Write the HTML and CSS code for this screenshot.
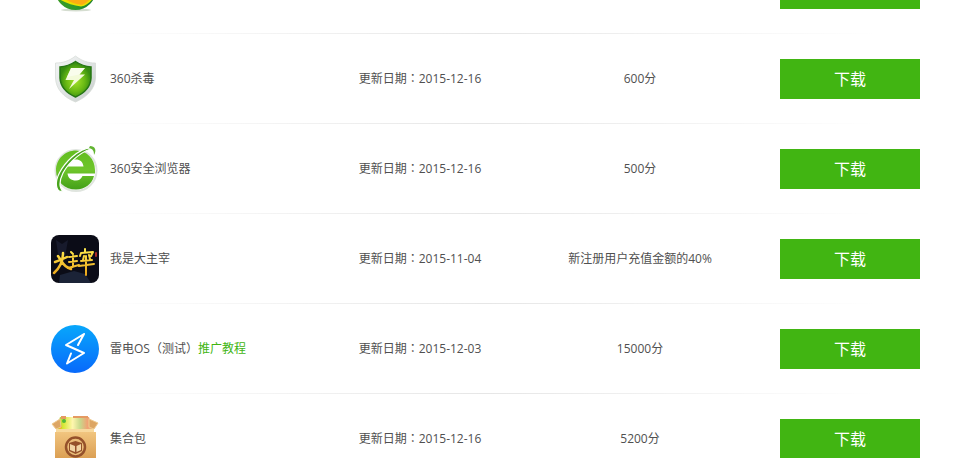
FILE: index.html
```html
<!DOCTYPE html>
<html lang="zh-CN">
<head>
<meta charset="utf-8">
<title>软件下载</title>
<link rel="stylesheet" href="styles.css">
</head>
<body>
<ul class="apps">
  <li class="app">
    <svg class="icon" viewBox="0 0 48 48" aria-hidden="true">
      <defs><linearGradient id="ball" x1="0" x2="1"><stop offset="0" stop-color="#3a9a22"/><stop offset=".5" stop-color="#2f9a2c"/><stop offset="1" stop-color="#157a2c"/></linearGradient></defs>
      <ellipse cx="25" cy="45" rx="15" ry="1.500" fill="#d5ddd0"/>
      <circle cx="24.500" cy="24.500" r="20.500" fill="url(#ball)"/>
      <path d="M8 34Q18 40 30 41.500Q38 40 43 32L40 18H12Z" fill="#e8e000"/>
      <path d="M14 34Q21 39 31 40Q37 38 41 31L36 16Z" fill="#fbad12"/>
    </svg>
    <span class="name"></span><span class="date"></span><span class="points"></span>
    <a class="download" href="#">下载</a>
  </li>
  <li class="app">
    <svg class="icon" viewBox="0 0 48 48" aria-hidden="true">
      <defs>
        <linearGradient id="rim" x1="0" x2="1" y2="1"><stop offset="0" stop-color="#f4f6f6"/><stop offset=".6" stop-color="#dce0e0"/><stop offset="1" stop-color="#c5cbc8"/></linearGradient>
        <radialGradient id="shield" cy=".55"><stop offset="0" stop-color="#a4e228"/><stop offset=".6" stop-color="#69b914"/><stop offset="1" stop-color="#378d10"/></radialGradient>
      </defs>
      <path d="M24.500 1C31 6 37 8 44.500 8V23C44 34 36 42 24.500 47C12 42 5 34 4.500 23V8C12 8 18 6 24.500 1Z" fill="url(#rim)" stroke="#d4dad4" stroke-width=".7"/>
      <path d="M24.500 6.500C29 9.500 34 11.500 40 12V23C39.500 32 33.500 38 24.500 42C15.500 38 9.500 32 9 23V12C15 11.500 20 9.500 24.500 6.500Z" fill="url(#shield)" stroke="#267515" stroke-width="1.500"/>
      <path d="M20 13H34L28.500 19.500H34L18 34L23 25H14.500Z" fill="#f3fbd9"/>
      <path d="M20 13H34L28.500 19.500L16 22Z" fill="#fff" opacity=".5"/>
    </svg>
    <span class="name">360杀毒</span>
    <span class="date" lang="zh-TW">更新日期：2015-12-16</span>
    <span class="points">600分</span>
    <a class="download" href="#">下载</a>
  </li>
  <li class="app">
    <svg class="icon" viewBox="0 0 48 48" aria-hidden="true">
      <defs><linearGradient id="browser" x2="0" y2="1"><stop offset="0" stop-color="#62bd20"/><stop offset=".5" stop-color="#6fc52b"/><stop offset="1" stop-color="#43a019"/></linearGradient></defs>
      <circle cx="25" cy="25.500" r="20.500" fill="#fff" stroke="#e0e5df" stroke-width="2"/>
      <path d="M25 5.500C14 5.500 5 14 5 25.500C5 37 14 44.500 25 44.500C34 44.500 41 39 43 31H31.500C30 34 28 35.500 25 35.500C20 35.500 17 33 16.500 28.500H44V25C44 14 36 5.500 25 5.500ZM17 21.500C17.500 17 20 14.500 25 14.500C29 14.500 32 17 32.500 21.500Z" fill="url(#browser)" fill-rule="evenodd"/>
      <path d="M43 3C37 2 29 5 21 12C11 21 3 34 6 43C7 46 9 47 12 46C8 43 8 36 12 28C19 15 33 5 43 3Z" fill="#49a51d" stroke="#fff" stroke-width="1.200"/>
      <path d="M39 1C44 1 46 5 43 10C43 6 42 4 38 3Z" fill="#62b532"/>
    </svg>
    <span class="name">360安全浏览器</span>
    <span class="date" lang="zh-TW">更新日期：2015-12-16</span>
    <span class="points">500分</span>
    <a class="download" href="#">下载</a>
  </li>
  <li class="app">
    <svg class="icon" viewBox="0 0 48 48" aria-hidden="true">
      <defs><linearGradient id="ink" gradientUnits="userSpaceOnUse" x1="0" y1="14" x2="0" y2="40"><stop offset="0" stop-color="#ffea4d"/><stop offset=".5" stop-color="#f5c735"/><stop offset="1" stop-color="#eaa51a"/></linearGradient></defs>
      <rect width="48" height="48" rx="8" fill="#0b0c17"/>
      <path d="M5 5L11 9L17 5L14 22L7 19Z" fill="#171a2c"/>
      <path d="M9 40L23 36L34 39L40 48H8Z" fill="#1b2337"/>
      <g fill="none" stroke="url(#ink)" stroke-width="2" stroke-linecap="round" stroke-linejoin="round">
        <path d="M4 27Q10 25 16 22M12 18Q12 30 3 38M11 27Q14 32 20 34M7 21L9 24" stroke-width="2.500"/>
        <path d="M20 17L22 19M18 22L26 21M18 27L26 26M22 21L22 32M17 33L28 30"/>
        <path d="M34 14L34 17M29 21L30 18L42 17L40 21M33 21L32 25M38 20L39 24M30 26L41 25M28 31L43 29M35 21L35 40"/>
      </g>
      <rect x="44" y="17" width="2" height="5" rx="1" fill="#a92928"/>
    </svg>
    <span class="name">我是大主宰</span>
    <span class="date" lang="zh-TW">更新日期：2015-11-04</span>
    <span class="points">新注册用户充值金额的40%</span>
    <a class="download" href="#">下载</a>
  </li>
  <li class="app">
    <svg class="icon" viewBox="0 0 48 48" aria-hidden="true">
      <defs><linearGradient id="sky" x2="0" y2="1"><stop offset="0" stop-color="#08a7fb"/><stop offset="1" stop-color="#0869fb"/></linearGradient></defs>
      <circle cx="24" cy="24" r="24" fill="url(#sky)"/>
      <path d="M27 20L33 9L15 20L33 28L16 38.500L20 28.500" fill="none" stroke="#fff" stroke-width="2" stroke-linejoin="round" stroke-linecap="round"/>
    </svg>
    <span class="name">雷电OS（测试）<a class="guide" href="#">推广教程</a></span>
    <span class="date" lang="zh-TW">更新日期：2015-12-03</span>
    <span class="points">15000分</span>
    <a class="download" href="#">下载</a>
  </li>
  <li class="app">
    <svg class="icon" viewBox="0 0 48 48" aria-hidden="true">
      <defs>
        <linearGradient id="glow" x1="0" x2="1"><stop offset="0" stop-color="#86c947"/><stop offset=".2" stop-color="#d8e836"/><stop offset=".45" stop-color="#fff6ae"/><stop offset=".65" stop-color="#c8d98c"/><stop offset=".85" stop-color="#f0a273"/><stop offset="1" stop-color="#e9bc86"/></linearGradient>
        <linearGradient id="carton" x2="0" y2="1"><stop offset="0" stop-color="#f1c57f"/><stop offset="1" stop-color="#d7984c"/></linearGradient>
      </defs>
      <path d="M9 2H38L42 16H5Z" fill="url(#glow)"/>
      <path d="M10 1H15V4H10ZM22 1H37V3H22Z" fill="#e59a62"/>
      <circle cx="13" cy="6" r="2" fill="#52b939"/><circle cx="9" cy="12" r="2" fill="#f5b51d"/>
      <path d="M9 4L1 9L5 14L10 12ZM38 4L47 8L43 14L38 12Z" fill="#dda664" stroke="#efc98d"/>
      <path d="M5 14H43V18H5Z" fill="#f8d99d"/>
      <path d="M4 17H45V48H4Z" fill="url(#carton)"/>
      <circle cx="24.500" cy="32" r="9.500" fill="#eabc78" stroke="#95512a" stroke-width="2.500"/>
      <path d="M18 28L24.500 26L31 28V36L24.500 39L18 36Z" fill="#95512a"/>
      <path d="M19 29L24 31V37L19 35ZM30 29L25.500 31V37L30 35Z" fill="#f1d4a3"/>
    </svg>
    <span class="name">集合包</span>
    <span class="date" lang="zh-TW">更新日期：2015-12-16</span>
    <span class="points">5200分</span>
    <a class="download" href="#">下载</a>
  </li>
</ul>
</body>
</html>
```
FILE: styles.css
```css
body {
  margin: 0;
  height: 100vh;
  overflow: hidden;
  background: #fff;
  color: #505050;
  font: 12px/20px "Open Sans", "Noto Sans CJK SC", sans-serif;
}

/* The list is scrolled part of the way through its first row. */
.apps {
  list-style: none;
  margin: -56px 50px 0;
  padding: 0;
}

.app {
  display: grid;
  grid-template-columns: 60px 23fr 16fr 28fr 140px;
  align-items: center;
  min-height: 90px;
  background: linear-gradient(to right, transparent 5%, #e6e6e6 50%, transparent 95%) bottom / 100% 1px no-repeat;
}

.icon {
  display: block;
  width: 48px;
  height: 48px;
  margin-left: 1px;
}

.date,
.points {
  text-align: center;
  white-space: nowrap;
}

/* The traditional face centres the full-width colon. */
.date {
  font-family: "Open Sans", "Noto Sans CJK TC", sans-serif;
}

.guide {
  color: #41b512;
  text-decoration: none;
}

.download {
  background: #41b512;
  color: #fff;
  font-size: 16px;
  line-height: 40px;
  text-align: center;
  text-decoration: none;
}
```
